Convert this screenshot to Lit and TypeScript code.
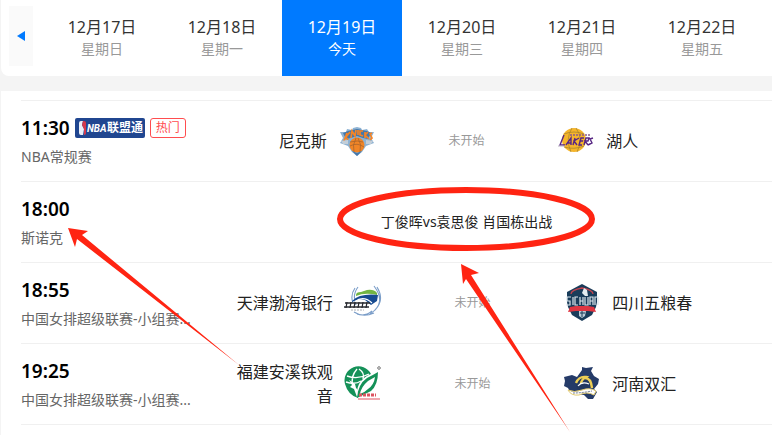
import { LitElement, html, svg, css, nothing } from "lit";
import { customElement, property, state } from "lit/decorators.js";
import { classMap } from "lit/directives/class-map.js";

type Logo = "knicks" | "lakers" | "tianjin" | "fujian" | "sichuan" | "henan";

interface Day {
  date: string;
  label: string;
}

interface Match {
  time: string;
  league: string;
  compact?: boolean;
  pass?: boolean;
  hot?: boolean;
  title?: string;
  status?: string;
  home?: { name: string; logo: Logo };
  away?: { name: string; logo: Logo };
}

const DAYS: Day[] = [
  { date: "12月17日", label: "星期日" },
  { date: "12月18日", label: "星期一" },
  { date: "12月19日", label: "今天" },
  { date: "12月20日", label: "星期三" },
  { date: "12月21日", label: "星期四" },
  { date: "12月22日", label: "星期五" },
];

const MATCHES: Match[] = [
  {
    time: "11:30", league: "NBA常规赛", compact: true, pass: true, hot: true, status: "未开始",
    home: { name: "尼克斯", logo: "knicks" }, away: { name: "湖人", logo: "lakers" },
  },
  { time: "18:00", league: "斯诺克", compact: true, title: "丁俊晖vs袁思俊 肖国栋出战" },
  {
    time: "18:55", league: "中国女排超级联赛-小组赛...", status: "未开始",
    home: { name: "天津渤海银行", logo: "tianjin" }, away: { name: "四川五粮春", logo: "sichuan" },
  },
  {
    time: "19:25", league: "中国女排超级联赛-小组赛...", status: "未开始",
    home: { name: "福建安溪铁观音", logo: "fujian" }, away: { name: "河南双汇", logo: "henan" },
  },
];

const LOGOS = {
  knicks: svg`
    <path d="M3 11 L9 11 L10 8 L15 9 L16 7 L20 6 L24 7 L25 9 L30 8 L32 11 L37 11 L34 17 L37 22 L29 25 L25 31 L20 35 L15 31 L11 25 L3 22 L6 17Z" fill="#8db2d3"/>
    <path d="M6 12 L11 10 L20 8 L30 10 L34 12 L31 18 L26 17 L20 15 L14 17 L9 18Z" fill="#4678aa"/>
    <path d="M7 20 L10 12 M9 16 L13 11 M9 16 L11 19 M14 17 L15 10 L18 15 L19 9 M21 9 V14 M26 10 L23 10 L23 14 L26 15 M28 11 L28 17 M31 11 L28 14 L32 18 M35 12 L33 13 L35 17 L33 19" fill="none" stroke="#f58426" stroke-width="1.7"/>
    <circle cx="20" cy="24" r="7.5" fill="#f08527"/>
    <path d="M13 21 Q21 19 26 21 M13 25 Q20 21 27 26 M19 17 Q15 24 17 31 M21 17 Q25 23 23 31" fill="none" stroke="#a9652c" stroke-width=".8"/>
    <path d="M4 20 L11 19 L11 23 L6 23Z M36 20 L29 19 L29 23 L34 23Z" fill="#c3ced8"/>
    <path d="M15 30 L20 35 L25 30 L20 32Z" fill="#4678aa"/>`,
  lakers: svg`
    <circle cx="18" cy="19" r="12" fill="#f5b52b"/>
    <path d="M8 13 Q18 9 28 13 M8 26 Q18 29 28 25 M16 7 Q9 18 15 31 M20 7 Q28 18 21 31" fill="none" stroke="#a9852f" stroke-width=".8"/>
    <path d="M14 14 H35" stroke="#8a5c8b" stroke-width="1.5" stroke-dasharray="2 1"/>
    <path d="M8 14 L4 24 H9 M10 24 L15 17 L15 24 M12 22 H15 M19 17 L17 24 M23 17 L18 20 L21 24 M28 17 H25 L23 24 H26 M24 20 H27 M28 24 L30 17 H33 L32 20 H29 L32 24 M37 17 L34 18 L36 22 L32 24" fill="none" stroke="#582784" stroke-width="1.4"/>
    <path d="M2 25 H9" stroke="#b8b0c2"/>`,
  tianjin: svg`
    <path d="M12 5 Q7 12 10 20 M15 4 Q9 12 13 22 M34 4 Q42 17 32 27 M31 3 Q44 20 27 31 M29 28 Q22 34 14 31 M31 30 Q20 35 11 29" fill="none" stroke="#7a9dc8" stroke-width="1.1"/>
    <path d="M13 12 Q13 9 18 9 L24 7 Q31 6 34 10 L34 12 Q22 9 13 13Z" fill="#72b543"/>
    <path d="M9 18 Q17 10 35 12 L34 18 L28 22 L22 17 Q15 15 9 19Z" fill="#174b91"/>
    <path d="M12 19 Q20 12 29 20" stroke="#fff" fill="none" stroke-width="1.2"/>
    <path d="M2 20 H27 M1 24 H26 M4 19 L3 25 M8 19 L7 25 M12 19 L11 25 M16 19 L15 25 M20 19 L19 25 M24 19 L23 25" stroke="#292b31" stroke-width="1.3"/>
    <path d="M8 27 H21" stroke="#adb0b6" stroke-dasharray="2 1"/>`,
  fujian: svg`
    <path d="M2 20 A14 14 0 0 1 28 10 Q20 13 16 20 Q13 26 15 34 Q5 31 2 20Z" fill="#159158"/>
    <path d="M4 12 Q15 16 26 10 M3 18 Q12 21 18 17 M14 5 Q7 13 10 22 M16 5 Q22 9 20 15" stroke="#fff" fill="none" stroke-width="1.4"/>
    <path d="M35 8 Q35 21 28 27 Q20 31 14 34 Q15 20 24 14 Q30 11 35 8Z" fill="#159158"/>
    <path d="M32 13 Q31 21 25 25 Q21 29 17 30 Q18 23 25 17Z" fill="#fff"/>
    <path d="M6 16 L12 20 L13 24 L15 26 L14 33 L11 25 L7 23 L9 21Z" fill="#fff"/>
    <circle cx="36" cy="4" r="1.3" fill="none" stroke="#777"/>
    <path d="M16 31 H33" stroke="#dc5460" stroke-width="3" stroke-dasharray="3 1"/>
    <path d="M15 35 H37" stroke="#ed929a" stroke-width="1.6"/>`,
  sichuan: svg`
    <path d="M20 1 L35 9 L35 19 L34 24 L30 32 L20 38 L10 32 L6 24 L5 19 L5 9Z" fill="#193c5a"/>
    <path d="M9 11 Q9 7 20 5 Q31 7 31 11" fill="none" stroke="#c4444e" stroke-width="1.3"/>
    <path d="M22 5 L25 7 L26 13 L23 13 L20 10Z" fill="#e5edf1"/>
    <path d="M9 14 H5 V18 H8 V22 H4 M11 14 V22 M16 14 H13 V22 H16 M18 14 V22 M18 18 H21 M21 14 V22 M23 14 V22 H26 V14 M28 22 V14 H31 V22 M28 18 H31 M33 22 V14 H36 V22" fill="none" stroke="#dce6ed" stroke-width="1.2"/>
    <path d="M8 24 L14 23 H26 L32 24 L34 29 L26 28 H14 L6 29Z" fill="#df3541"/>
    <path d="M17 28 H24 L23 33 L20 35 L17 33Z" fill="#bbcbd6"/>
    <path d="M18 30 H23 M20 28 V34" stroke="#193c5a"/>`,
  henan: svg`
    <path d="M20 6 L20 3 L24 4 L31 3 L29 7 L32 12 L37 15 L36 20 L32 25 L35 28 L31 35 L26 35 L22 31 L15 30 L8 28 L6 24 L2 22 L3 17 L2 13 L10 11 L15 13Z" fill="#253b68"/>
    <circle cx="22" cy="20" r="8" fill="#23385f"/>
    <path d="M14 19 Q17 12 24 13 Q19 16 19 20 M23 14 Q29 14 30 24" stroke="#edce54" stroke-width="2.4" fill="none"/>
    <path d="M16 22 Q20 17 27 20" stroke="#fff" stroke-width="1.2" fill="none"/>
    <path d="M6 26 Q12 29 20 26 Q28 23 34 27 L32 31 Q25 27 17 31 Q9 32 6 26Z" fill="#fff" stroke="#e2ca6e"/>
    <path d="M11 29 Q20 29 30 27" fill="none" stroke="#697489" stroke-dasharray="2 1"/>`,
};

@customElement("team-logo")
class TeamLogo extends LitElement {
  @property() name: Logo = "knicks";

  static styles = css`
    :host { display: block; width: 40px; height: 40px; }
    .art { display: block; width: 100%; height: 100%; }
  `;

  render() {
    return html`<svg class="art" viewBox="0 0 40 40" aria-hidden="true">${LOGOS[this.name]}</svg>`;
  }
}

@customElement("app-root")
class AppRoot extends LitElement {
  @state() private selected = 2;

  static styles = css`
    :host {
      display: block;
      position: relative;
      min-height: 100vh;
      overflow: hidden;
      background: #f4f4f4;
      color: #222;
      font-family: "Noto Sans", "Noto Sans CJK SC", sans-serif;
      font-size: 16px;
    }
    * { box-sizing: border-box; }
    .page { display: flex; flex-direction: column; gap: 15px; min-height: 100vh; padding-left: 1px; }
    .days {
      display: flex;
      align-items: flex-start;
      gap: 9px;
      padding: 0 10px 0 8px;
      background: #fff;
      border-bottom-left-radius: 8px;
    }
    .prev {
      display: grid;
      place-items: center;
      flex: none;
      width: 24px;
      height: 60px;
      margin-top: 6px;
      padding: 0;
      border: 0;
      background: #fafafa;
      cursor: pointer;
    }
    .prev-icon { display: block; width: 8px; height: 10px; fill: #007aff; }
    .strip { display: grid; grid-template-columns: repeat(6, minmax(0, 1fr)); flex: 1; }
    .day {
      display: flex;
      flex-direction: column;
      align-items: center;
      padding: 15px 0 17px;
      border: 0;
      background: none;
      color: #333;
      font: inherit;
      white-space: nowrap;
      cursor: pointer;
    }
    .date { line-height: 24px; }
    .weekday { color: #999; font-size: 14px; line-height: 20px; }
    .day.active { background: #007aff; color: #fff; }
    .day.active .weekday { color: #fff; }
    .board { flex: 1; padding: 9px 0 0 20px; background: #fff; }
    .list { margin: 0; padding: 0; list-style: none; border-top: 1px solid #f0f0f0; }
    .row { display: flex; align-items: center; min-height: 81px; border-bottom: 1px solid #f0f0f0; }
    .info { flex: none; width: 172px; padding-bottom: 1px; }
    .row.compact { padding-right: 6px; }
    .row.compact .info { width: 166px; }
    .head { display: flex; align-items: center; gap: 5px; margin-bottom: 5px; }
    .time { color: #000; font-size: 19px; font-weight: 600; line-height: 28px; }
    .league { color: #666; font-size: 14px; line-height: 20px; white-space: nowrap; }
    .pass { flex: none; display: block; width: 70px; height: 20px; }
    .pass-latin { font: italic 700 10px Roboto, sans-serif; fill: #fff; }
    .pass-text { font: 700 12px "Noto Sans CJK SC", sans-serif; fill: #fff; }
    .hot {
      flex: none;
      padding: 0 5px;
      border: 1px solid #ff4d4f;
      border-radius: 3px;
      color: #ff4d4f;
      font-size: 12px;
      line-height: 18px;
    }
    .match {
      display: grid;
      grid-template-columns: minmax(0, 15fr) 40px minmax(0, 18fr) 40px minmax(0, 17fr);
      align-items: center;
      flex: 1;
    }
    .team { line-height: 24px; }
    .home { justify-self: end; max-width: 108px; padding-right: 10px; text-align: right; }
    .away { padding-left: 10px; }
    .status { color: #999; font-size: 12px; line-height: 20px; text-align: center; }
    .title { flex: 1; padding-right: 20px; font-size: 14px; line-height: 20px; text-align: center; }
    .marks { position: absolute; top: 0; left: 0; width: 772px; height: 435px; pointer-events: none; }
    .ring { fill: none; stroke: #ff2412; stroke-width: 6; }
    .arrow { fill: #ff2412; }
  `;

  private renderPass() {
    return html`
      <svg class="pass" viewBox="0 0 70 20" role="img" aria-label="NBA联盟通">
        <rect width="70" height="20" rx="2" fill="#204690" />
        <path d="M6 3 H8 L7 7 L9 11 L8 17 H6 Q4 17 4 15 V5 Q4 3 6 3Z" fill="#e9eef8" />
        <path d="M8 3 H9 Q11 3 11 5 V15 Q11 17 9 17 L9 11 L7 7Z" fill="#d3384c" />
        <text class="pass-latin" x="12" y="14">NBA</text>
        <text class="pass-text" x="32" y="14">联盟通</text>
      </svg>`;
  }

  private renderMatch(m: Match) {
    return html`
      <li class=${classMap({ row: true, compact: !!m.compact })}>
        <div class="info">
          <div class="head">
            <time class="time">${m.time}</time>
            ${m.pass ? this.renderPass() : nothing}
            ${m.hot ? html`<span class="hot">热门</span>` : nothing}
          </div>
          <div class="league">${m.league}</div>
        </div>
        ${m.home && m.away
          ? html`
              <div class="match">
                <span class="team home">${m.home.name}</span>
                <team-logo .name=${m.home.logo}></team-logo>
                <span class="status">${m.status}</span>
                <team-logo .name=${m.away.logo}></team-logo>
                <span class="team away">${m.away.name}</span>
              </div>`
          : html`<div class="title">${m.title}</div>`}
      </li>`;
  }

  render() {
    return html`
      <div class="page">
        <nav class="days">
          <button class="prev" type="button" aria-label="前一天">
            <svg class="prev-icon" viewBox="0 0 8 10"><path d="M0 5 L8 0 V10Z" /></svg>
          </button>
          <div class="strip">
            ${DAYS.map((d, i) => html`
              <button
                type="button"
                class=${classMap({ day: true, active: i === this.selected })}
                aria-pressed=${i === this.selected}
                @click=${() => (this.selected = i)}
              >
                <span class="date">${d.date}</span>
                <span class="weekday">${d.label}</span>
              </button>`)}
          </div>
        </nav>
        <main class="board">
          <ul class="list">${MATCHES.map((m) => this.renderMatch(m))}</ul>
        </main>
      </div>
      <svg class="marks" viewBox="0 0 772 435" aria-hidden="true">
        <ellipse class="ring" cx="466" cy="219" rx="126" ry="29" />
        <path class="arrow" d="M68 228 L88 231 L82 235 L239 365 L77 239 L75 247Z" />
        <path class="arrow" d="M461 264 L479 273 L471 275 L570 432 L466 279 L463 284Z" />
      </svg>`;
  }
}
